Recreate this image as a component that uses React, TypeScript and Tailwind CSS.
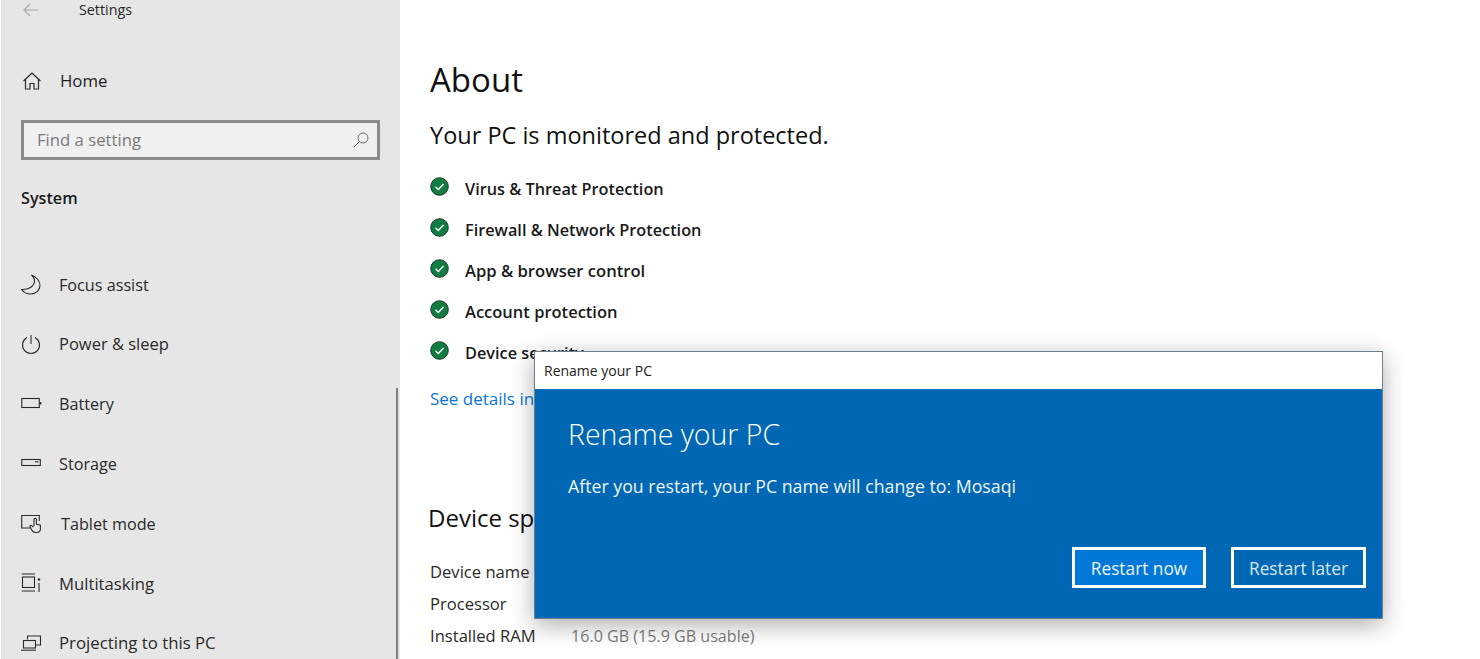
import React from "react";

const font = { fontFamily: '"Open Sans", "Noto Sans", sans-serif' };

const S = "#2b2b2b";
function Ico({ children }: { children: React.ReactNode }) {
  return (
    <svg width="24" height="22" viewBox="0 0 24 22" fill="none" stroke={S} strokeWidth="1.1" className="shrink-0">
      {children}
    </svg>
  );
}

const items: [string, React.ReactNode, string][] = [
  ["Focus assist", <path d="M12.500 1C18 3 21 7.500 21 11.500 21 16 17 20 12 20 8 20 4.500 18.500 2.700 15.500 9 16 14.500 13 15.500 8 16 5.500 14.500 3 12.500 1z" />, "ml-[16px] text-[16.200px]"],
  ["Power & sleep", <><path d="M8 3.500a8.500 8.500 0 1 0 8 0" /><path d="M12 1v9" /></>, "ml-[16px] text-[16.500px]"],
  ["Battery", <><rect x="2.800" y="5.500" width="17.500" height="9" /><path d="M21.500 9v2.500" strokeWidth="1.600" /></>, "ml-[16px] text-[16.200px]"],
  ["Storage", <><rect x="2.800" y="6.500" width="18.500" height="6" /><path d="M16 8.800h3.500" /></>, "ml-[16px] text-[16.200px]"],
  ["Tablet mode", <><path d="M11 15H2.700V2.500H20.300V8" /><path d="M15 13V6.500a1.200 1.200 0 0 1 2.400 0V11l4 1.200V16c0 2-1.500 3.500-4 3.500h-1c-2 0-3-1-4-3l-1.500-3a1 1 0 0 1 1.500-1l2 1.500" /></>, "ml-[18px] text-[16.200px]"],
  ["Multitasking", <><path d="M2.700 1H16M2.700 18H16" /><rect x="3.500" y="4" width="12" height="10.500" /><path d="M20 10v9" /><circle cx="20" cy="6.500" r="1.300" fill={S} stroke="none" /></>, "ml-[16px] text-[16.700px]"],
  ["Projecting to this PC", <><path d="M8.500 6.500V3H21.500v9H17" /><rect x="4.500" y="7.500" width="12" height="7.500" /><path d="M2 17.200h15" /></>, "ml-[16px] text-[16.800px]"],
];

const checks: [string, string][] = [
  ["Virus & Threat Protection", "text-[16.300px]"],
  ["Firewall & Network Protection", "text-[16.300px]"],
  ["App & browser control", "text-[16.600px]"],
  ["Account protection", "text-[16.500px]"],
  ["Device security", "text-[16.300px]"],
];

function Check() {
  return (
    <svg width="19" height="19" viewBox="0 0 19 19" className="-mt-[3px] shrink-0">
      <circle cx="9.500" cy="9.500" r="8.800" fill="#107c41" stroke="#1d3b2a" strokeWidth="1" />
      <path d="M5.500 9.800l2.800 2.600 5.200-5.400" stroke="#fff" strokeWidth="1.400" fill="none" />
    </svg>
  );
}

export default function App() {
  return (
    <div style={font} className="relative flex h-[659px] w-[1480px] overflow-hidden bg-white">
      <aside className="relative ml-[1px] flex h-full w-[399px] shrink-0 flex-col overflow-hidden bg-[#e6e6e6] text-[#1f1f1f]">
        <div className="flex h-[20px] shrink-0 items-center pl-[21px]">
          <svg width="18" height="14" viewBox="0 0 18 14" fill="none" stroke="#a8a8a8" strokeWidth="1.100">
            <path d="M16 7H2M8 1L2 7l6 6" />
          </svg>
          <span className="ml-[39px] text-[14.300px] leading-none text-[#262626]">Settings</span>
        </div>
        <div className="mt-[49px] flex h-[24px] shrink-0 items-center pl-[21px]">
          <svg width="20" height="20" viewBox="0 0 20 20" fill="none" stroke={S} strokeWidth="1.200">
            <path d="M1.500 10L10 2l8.500 8M3.500 8.500V18h4.500v-5.500h4V18h4.500V8.500" />
          </svg>
          <span className="ml-[18px] text-[16.800px] leading-none">Home</span>
        </div>
        <div className="ml-[20px] mt-[27px] flex h-[40px] w-[359px] shrink-0 items-center justify-between border-[3px] border-[#8c8c8c] bg-[#f0f0f0] pl-[13px] pr-[7px]">
          <span className="text-[16.700px] leading-none text-[#7a7a7a]">Find a setting</span>
          <svg width="18" height="18" viewBox="0 0 18 18" fill="none" stroke="#6e6e6e" strokeWidth="1">
            <circle cx="11" cy="7" r="5" />
            <path d="M7.500 10.500L2 16" />
          </svg>
        </div>
        <div className="ml-[20px] mt-[28px] shrink-0 text-[16.200px] font-semibold leading-[20px] text-[#1a1a1a]">System</div>
        <nav className="mt-[47px] flex shrink-0 flex-col">
          {items.map(([label, icon, cls]) => (
            <div key={label} className="flex h-[59.800px] shrink-0 items-center pl-[18px]">
              <Ico>{icon}</Ico>
              <span className={`${cls} leading-none text-[#2a2a2a]`}>{label}</span>
            </div>
          ))}
        </nav>
        <div className="absolute bottom-0 right-[2px] h-[271px] w-[2.500px] bg-[#7f7f7f]" />
      </aside>

      <main className="min-w-0 flex-1 pl-[30px] text-black">
        <h1 className="mt-[58px] text-[33px] font-normal leading-[44px] text-[#111]">About</h1>
        <p className="mt-[17px] text-[23.500px] leading-[32px] text-[#111]">Your PC is monitored and protected.</p>
        <ul className="mt-[27px] flex flex-col gap-[21px]">
          {checks.map(([c, cls]) => (
            <li key={c} className="flex h-[20px] items-center">
              <Check />
              <span className={`${cls} ml-[16px] mt-[2px] font-semibold leading-none text-[#1a1a1a]`}>{c}</span>
            </li>
          ))}
        </ul>
        <a className="mt-[25px] block text-[17px] leading-[24px] text-[#0a78d7]">See details in Windows Security</a>
        <h2 className="-ml-[2px] mt-[91px] text-[24px] font-normal leading-[32px] text-[#111]">Device specifications</h2>
        <div className="mt-[26px] flex flex-col gap-[8px] text-[16.600px] leading-[24px] text-[#2a2a2a]">
          <div className="flex"><span className="w-[141px]">Device name</span></div>
          <div className="flex"><span className="w-[141px]">Processor</span></div>
          <div className="flex"><span className="w-[141px]">Installed RAM</span><span className="text-[16.100px] text-[#7d7d7d]">16.0 GB (15.9 GB usable)</span></div>
        </div>
      </main>

      <div className="absolute left-[534px] top-[351px] flex h-[268px] w-[849px] flex-col border border-[#6f7f8c] bg-[#0067b4] shadow-[0_6px_22px_rgba(0,0,0,0.32)]">
        <div className="flex h-[37px] shrink-0 items-center bg-white pl-[9px] text-[14px] text-[#222]">Rename your PC</div>
        <div className="flex flex-1 flex-col pl-[33px] pr-[16px] text-white">
          <div className="mt-[23px] text-[28.500px] font-light leading-[44px]">Rename your PC</div>
          <div className="mt-[17px] text-[17.740px] leading-[26px] text-[#eef5fb]">After you restart, your PC name will change to: Mosaqi</div>
          <div className="mt-[48px] flex justify-end gap-[25px]">
            <button className="flex h-[41px] w-[134px] items-center justify-center border-[3px] border-white bg-[#0078d7] pt-[2px] text-[17.300px] text-[#eef5fb]">Restart now</button>
            <button className="flex h-[41px] w-[135px] items-center justify-center border-[3px] border-white bg-[#0067b4] pt-[2px] text-[17.300px] text-[#d5e6f3]">Restart later</button>
          </div>
        </div>
      </div>
    </div>
  );
}
